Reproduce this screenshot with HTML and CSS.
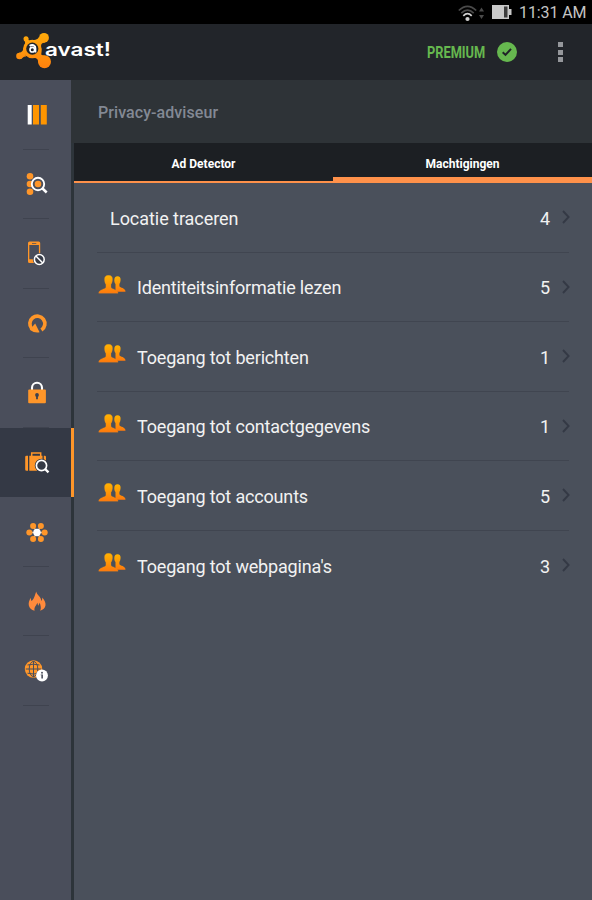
FILE: index.html
```html
<!DOCTYPE html>
<html lang="nl">
<head>
  <meta charset="UTF-8">
  <meta name="viewport" content="width=device-width, initial-scale=1.0">
  <title>Privacy-adviseur</title>
  <link rel="stylesheet" href="styles.css">
</head>
<body>

  <svg class="defs" width="0" height="0">
    <defs>
      <linearGradient id="orange" x1="0" y1="0" x2="0" y2="1">
        <stop offset="0" stop-color="#ffb400"/>
        <stop offset="1" stop-color="#ff7a0c"/>
      </linearGradient>
      <linearGradient id="logo-orange" gradientUnits="userSpaceOnUse" x1="0" y1="0" x2="0" y2="38">
        <stop offset="0" stop-color="#ffac0a"/>
        <stop offset="1" stop-color="#ff7f0e"/>
      </linearGradient>
      <symbol id="people" viewBox="0 0 27 20">
        <path fill="url(#orange)" d="M19 1.200c2.200 0 3.300 1.500 3.100 3.700-.1 1.700-.5 3-1.200 4v2.400c.6 1.600 6.100 1.500 6.100 5.400H17V9c-.9-1-1.200-2.300-1.200-4 0-2.300 1-3.800 3.200-3.800z"/>
        <path fill="url(#orange)" stroke="#d98a2b" stroke-width=".3" d="M10 .2c2.900 0 4.200 1.700 4 4.300-.1 2-.6 3.700-1.500 4.900v3c.7 1.800 7.100 2 7.100 5.800H.2c0-3.800 6.500-4 7.200-5.800v-3C6.500 8.200 6.100 6.500 6 4.500 5.800 1.900 7.200.2 10 .2z"/>
      </symbol>
      <symbol id="chevron" viewBox="0 0 8 14">
        <path d="M1 1l5.600 6L1 13" fill="none" stroke="#343945" stroke-width="1.900"/>
      </symbol>
    </defs>
  </svg>

  <div class="status-bar">
    <svg class="wifi" width="26" height="18" viewBox="0 0 26 18">
      <g fill="none" stroke-width="1.700">
        <path d="M.8 6.500Q9.500-1.800 18.200 6.500" stroke="#4a4a4a"/>
        <path d="M3.300 9.200Q9.500 3.200 15.700 9.200" stroke="#4a4a4a"/>
        <path d="M5.300 11.800Q9.500 7.400 13.700 11.800" stroke="#d0d0d0"/>
      </g>
      <circle cx="9.500" cy="15" r="2.100" fill="#d0d0d0"/>
      <path d="M21 7.500L23.500 3.500 26 7.500zM21 11L23.500 15 26 11z" fill="#4a4a4a"/>
    </svg>
    <svg class="battery" width="20" height="14" viewBox="0 0 20 14">
      <path d="M0 0h17v4h2.500v6H17v4H0z" fill="#c8c8c8"/>
      <path d="M12 1.500h3.500v11H12z" fill="#3c3c3c"/>
    </svg>
    <span class="clock">11:31 AM</span>
  </div>

  <header class="header">
    <svg class="logo" width="98" height="40" viewBox="0 0 98 40">
      <g fill="url(#logo-orange)">
        <circle cx="3.500" cy="24" r="3.300"/>
        <circle cx="10" cy="6.800" r="2.500"/>
        <circle cx="28" cy="5.800" r="4.900"/>
        <circle cx="28.500" cy="29.700" r="6.500"/>
        <circle cx="16.200" cy="17" r="9.200"/>
        <path d="M3 20.700C6 20.500 7.500 18.500 8 15l2 9.500c-3 0-3.500 1.500-5.500 2.600zM7.800 8c1.500 1.500 1.500 3 1 5.200l5-4.500C12.300 8.300 12 7.500 12.300 6zM14 8.300c4-.2 7.800-.2 9.100-3.500l6 5.800c-3.800.2-4.300 2.200-3.800 5 .6 2.600.3 4.600 0 6.200-.2 1.300 1 1.800 3.200 1.600l-6.300 7.500c.2-3.500-1.200-5.300-5.500-5.500z"/>
      </g>
      <circle cx="16.300" cy="16.700" r="6.100" fill="#202328"/>
      <path d="M13.600 13.900q2.700-1.700 4.700-.1 1.100.8 1.100 2.400v4.200" fill="none" stroke="#fff" stroke-width="1.900"/>
      <circle cx="16.300" cy="17.700" r="2.300" fill="none" stroke="#fff" stroke-width="1.600"/>
      <text class="logo-text" x="29" y="23.500" textLength="66" lengthAdjust="spacingAndGlyphs">avast!</text>
    </svg>
    <span class="premium">PREMIUM</span>
    <svg class="check" width="20" height="20" viewBox="0 0 20 20">
      <circle cx="10" cy="10" r="10" fill="#66b84f"/>
      <path d="M5.700 10.200l2.800 2.700 5.500-6" fill="none" stroke="#202328" stroke-width="2"/>
    </svg>
    <div class="menu"><i></i><i></i><i></i></div>
  </header>

  <div class="content">
    <nav class="sidebar">
      <a class="item">
        <svg width="30" height="30" viewBox="0 0 30 30">
          <path d="M5.700 5h4v19.500h-4z" fill="#fff"/>
          <path d="M11 5h6v19.500h-6zM18.800 5h6v19.500h-6z" fill="#ff9500"/>
        </svg>
      </a>
      <a class="item">
        <svg width="30" height="30" viewBox="0 0 30 30">
          <g fill="#ff9629">
            <circle cx="8" cy="7.300" r="3.300"/><circle cx="8" cy="15" r="3.300"/><circle cx="8" cy="22.700" r="3.300"/>
          </g>
          <circle cx="16" cy="15" r="6.200" fill="#4a4e5b" stroke="#fff" stroke-width="1.900"/>
          <circle cx="16" cy="15" r="3.300" fill="#ff9629"/>
          <path d="M20.500 19.500l4.200 4" stroke="#fff" stroke-width="2.500"/>
        </svg>
      </a>
      <a class="item">
        <svg width="30" height="30" viewBox="0 0 30 30">
          <path fill="#ff9629" fill-rule="evenodd" d="M7.500 2.500h9.200q1.500 0 1.500 1.500v18.500q0 1.500-1.500 1.500H7.500Q6 24 6 22.500V4q0-1.500 1.500-1.500zM7.300 6v14.200h9.600V6zM10 3.900v.9h4.300v-.9z"/>
          <circle cx="17.300" cy="20.500" r="6.400" fill="#4a4e5b"/>
          <circle cx="17.300" cy="20.500" r="4.900" fill="#373c48" stroke="#fff" stroke-width="1.500"/>
          <path d="M13.900 17l6.900 7" stroke="#fff" stroke-width="1.500"/>
        </svg>
      </a>
      <a class="item">
        <svg width="30" height="30" viewBox="0 0 30 30">
          <path d="M9.700 20.600A7.500 7.500 0 1 1 19.400 22" fill="none" stroke="#ff9629" stroke-width="3.700"/>
          <path d="M13.200 15.600L17.600 24.300Q12.500 25.500 7.700 21.700z" fill="#ff9629"/>
        </svg>
      </a>
      <a class="item">
        <svg width="30" height="30" viewBox="0 0 30 30">
          <path d="M10 12.500V9.700a5 5 0 0 1 10 0v2.800" fill="none" stroke="#fff" stroke-width="2.100"/>
          <rect x="6.200" y="11.500" width="17.700" height="13.800" rx="1" fill="#ff9629"/>
          <circle cx="15" cy="17" r="1.900" fill="#3e424e"/>
          <path d="M14.100 17h1.800v4.300h-1.800z" fill="#3e424e"/>
        </svg>
      </a>
      <a class="item active">
        <svg width="30" height="30" viewBox="0 0 30 30">
          <path d="M9.700 9.300V5.900h9v3.400" fill="none" stroke="#ff9629" stroke-width="1.500"/>
          <path d="M4.500 8.800H6v14.900H4.500q-1.300 0-1.300-1.300V10.100q0-1.300 1.300-1.300zM7.300 8.800h13.200v14.900H7.300zM21.800 8.800h.9q1.300 0 1.300 1.300v12.300q0 1.300-1.300 1.300h-.9z" fill="#ff9629"/>
          <circle cx="19.500" cy="18.500" r="6.700" fill="#343945"/>
          <circle cx="19.500" cy="18.500" r="5.100" fill="none" stroke="#fff" stroke-width="1.700"/>
          <path d="M23.200 22.100l3.300 3.200" stroke="#fff" stroke-width="2.300"/>
        </svg>
      </a>
      <a class="item">
        <svg width="30" height="30" viewBox="0 0 30 30">
          <path d="M7.500 15.500h15M11.200 9l7.600 13M18.800 9l-7.600 13" stroke="#e3c5a8" stroke-width="1.300"/>
          <g fill="#ff9629">
            <circle cx="7.300" cy="15.500" r="3"/><circle cx="22.700" cy="15.500" r="3"/>
            <circle cx="11.100" cy="9" r="3"/><circle cx="18.900" cy="9" r="3"/>
            <circle cx="11.100" cy="22" r="3"/><circle cx="18.900" cy="22" r="3"/>
          </g>
          <circle cx="15" cy="15.500" r="3.700" fill="#fff"/>
        </svg>
      </a>
      <a class="item">
        <svg width="30" height="30" viewBox="0 0 30 30">
          <path d="M12.600 24.800C6 22.800 5.200 17 8.900 11.700c0 1.400.1 2.500.8 3.400 2.700-2.700 3.300-6.200 4.500-9.600.6 3.600 5.200 5.300 5 9.500.9-.9 1.100-2 1.100-3.400 5.200 5.700 4 11.300-2.100 13.200 1.300-2.600.4-4.700-.4-8-.9 1.300-1 2.200-1.700 3-.3-1.500-.4-2.200-.9-3-.4 2.600-3.500 4.100-2.600 8z" fill="#ff8a3c"/>
        </svg>
      </a>
      <a class="item">
        <svg width="30" height="30" viewBox="0 0 30 30">
          <circle cx="11.500" cy="13" r="8.700" fill="#ff9629"/>
          <g fill="none" stroke="#4a4e5b" stroke-width="1">
            <ellipse cx="11.500" cy="13" rx="4.300" ry="7.600"/>
            <path d="M11.500 5.200v16M3.800 13h15.500M5.500 9q6-1.600 12 0M5.500 17.200q6 1.600 12 0"/>
          </g>
          <circle cx="20" cy="19.500" r="5.900" fill="#fff"/>
          <circle cx="20" cy="16.700" r="1" fill="#555965"/>
          <path d="M18.700 18.500H21v4h-1.700v-3.200h-.6z" fill="#555965"/>
        </svg>
      </a>
    </nav>

    <main class="main">
      <h1 class="title">Privacy-adviseur</h1>
      <div class="tabs">
        <div class="tab">Ad Detector</div>
        <div class="tab selected">Machtigingen</div>
      </div>
      <ul class="list">
        <li class="row no-icon">
          <span class="name">Locatie traceren</span>
          <span class="count">4</span>
          <svg class="chevron"><use href="#chevron"/></svg>
        </li>
        <li class="row">
          <svg class="people"><use href="#people"/></svg>
          <span class="name">Identiteitsinformatie lezen</span>
          <span class="count">5</span>
          <svg class="chevron"><use href="#chevron"/></svg>
        </li>
        <li class="row">
          <svg class="people"><use href="#people"/></svg>
          <span class="name">Toegang tot berichten</span>
          <span class="count">1</span>
          <svg class="chevron"><use href="#chevron"/></svg>
        </li>
        <li class="row">
          <svg class="people"><use href="#people"/></svg>
          <span class="name">Toegang tot contactgegevens</span>
          <span class="count">1</span>
          <svg class="chevron"><use href="#chevron"/></svg>
        </li>
        <li class="row">
          <svg class="people"><use href="#people"/></svg>
          <span class="name">Toegang tot accounts</span>
          <span class="count">5</span>
          <svg class="chevron"><use href="#chevron"/></svg>
        </li>
        <li class="row">
          <svg class="people"><use href="#people"/></svg>
          <span class="name">Toegang tot webpagina's</span>
          <span class="count">3</span>
          <svg class="chevron"><use href="#chevron"/></svg>
        </li>
      </ul>
    </main>
  </div>

</body>
</html>
```
FILE: styles.css
```css
* {
  box-sizing: border-box;
}

body {
  margin: 0;
  height: 900px;
  display: flex;
  flex-direction: column;
  overflow: hidden;
  background-color: #4a505b;
  color: #f2f2f2;
  font-family: Roboto, sans-serif;
}

svg {
  display: block;
  flex: none;
}

.defs {
  position: absolute;
}

/* Status bar */
.status-bar {
  height: 24px;
  display: flex;
  align-items: center;
  justify-content: flex-end;
  padding-right: 6px;
  background-color: #000;
}

.wifi {
  margin-top: 2px;
}

.battery {
  margin-left: 8px;
}

.clock {
  margin-left: 7px;
  width: 67px;
  padding-top: 2px;
  font-size: 16px;
  line-height: 24px;
  letter-spacing: -0.1px;
  color: #c4c4c4;
  white-space: nowrap;
}

/* Header */
.header {
  height: 56px;
  display: flex;
  align-items: center;
  padding: 0 29px 0 16px;
  background-color: #22252a;
}

.logo {
  margin-bottom: 1px;
}

.logo-text {
  font-family: Inter, sans-serif;
  font-size: 18px;
  font-weight: 600;
  fill: #fff;
}

.premium {
  margin-left: auto;
  width: 58px;
  padding-top: 1px;
  font-size: 16px;
  font-weight: bold;
  color: #66b84f;
  transform: scaleX(0.8);
  transform-origin: left;
}

.check {
  margin-left: 12px;
  margin-bottom: 1px;
}

.menu {
  display: flex;
  flex-direction: column;
  gap: 2.5px;
  margin-left: 41px;
}

.menu i {
  width: 5px;
  height: 5px;
  background-color: #95979b;
}

.content {
  flex: 1;
  display: flex;
}

/* Sidebar */
.sidebar {
  width: 74px;
  border-right: 3px solid #2d343a;
  background-color: #4a4e5b;
}

.item {
  height: 69.5px;
  display: flex;
  flex-direction: column;
  align-items: center;
  padding: 19.5px 0 0 3px;
}

.item::after {
  content: "";
  width: 26px;
  height: 1px;
  margin: 19px 3px 0 0;
  background-color: #3f434f;
}

.item.active {
  width: 74px;
  padding-right: 0;
  border-right: 3px solid #ff9629;
  background-color: #343945;
}

.item.active::after {
  background-color: transparent;
}

/* Main */
.main {
  flex: 1;
}

.title {
  height: 63px;
  margin: 0 0 0 -3px;
  padding-left: 27px;
  font-size: 16px;
  line-height: 65px;
  font-weight: 500;
  letter-spacing: 0.07px;
  color: #838994;
  background-color: #2e3337;
}

.tabs {
  height: 40px;
  display: flex;
  background-color: #1c1f23;
}

.tab {
  flex: 1;
  border-bottom: 2px solid #ff914a;
  text-align: center;
  font-size: 12px;
  line-height: 42px;
  font-weight: bold;
  color: #fff;
}

.tab.selected {
  border-bottom-width: 6px;
}

.list {
  margin: 0;
  padding: 0 23px;
  list-style: none;
}

.row {
  height: 69.5px;
  display: flex;
  align-items: center;
  padding-top: 2px;
  border-bottom: 1px solid #404550;
  font-size: 18px;
  letter-spacing: -0.17px;
}

.row:last-child {
  border-bottom: none;
}

.no-icon {
  padding-left: 13px;
  letter-spacing: -0.05px;
}

.people {
  width: 28px;
  height: 20px;
  margin: 0 11px 6px 1px;
}

.count {
  margin-left: auto;
}

.chevron {
  width: 8px;
  height: 14px;
  margin: 0 -1px 2px 12px;
}
```
